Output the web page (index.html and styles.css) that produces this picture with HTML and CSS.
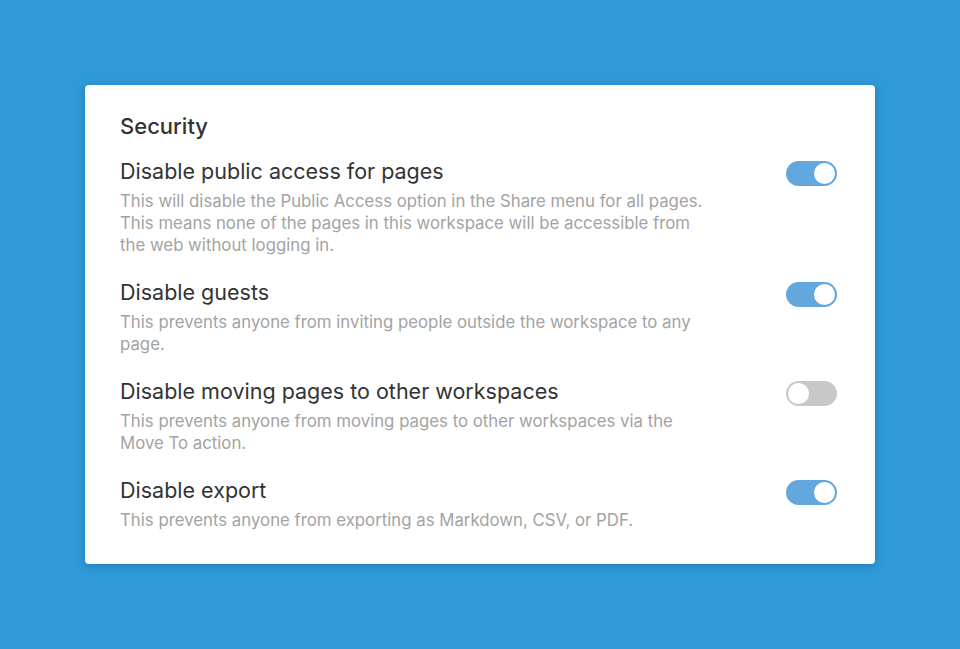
FILE: index.html
```html
<!DOCTYPE html>
<html>
<head>
<meta charset="utf-8">
<link rel="stylesheet" href="styles.css">
</head>
<body>
<div class="card">
  <h2 class="heading">Security</h2>
  <div class="row">
    <div class="text">
      <div class="title">Disable public access for pages</div>
      <div class="desc">This will disable the Public Access option in the Share menu for all pages.<br>This means none of the pages in this workspace will be accessible from<br>the web without logging in.</div>
    </div>
    <div class="toggle on"><span class="knob"></span></div>
  </div>
  <div class="row">
    <div class="text">
      <div class="title">Disable guests</div>
      <div class="desc">This prevents anyone from inviting people outside the workspace to any<br>page.</div>
    </div>
    <div class="toggle on"><span class="knob"></span></div>
  </div>
  <div class="row">
    <div class="text">
      <div class="title">Disable moving pages to other workspaces</div>
      <div class="desc">This prevents anyone from moving pages to other workspaces via the<br>Move To action.</div>
    </div>
    <div class="toggle"><span class="knob"></span></div>
  </div>
  <div class="row">
    <div class="text">
      <div class="title">Disable export</div>
      <div class="desc">This prevents anyone from exporting as Markdown, CSV, or PDF.</div>
    </div>
    <div class="toggle on"><span class="knob"></span></div>
  </div>
</div>
</body>
</html>
```
FILE: styles.css
```css
html, body {
  margin: 0;
  padding: 0;
}
body {
  background: #2e9bd8;
  width: 960px;
  height: 649px;
  padding-top: 85px;
  padding-left: 85px;
  box-sizing: border-box;
  font-family: Inter, "Open Sans", sans-serif;
  color: #333;
}
.card {
  width: 790px;
  box-sizing: border-box;
  background: #fff;
  border-radius: 4px;
  box-shadow: 0 2px 10px rgba(0, 40, 80, 0.25);
  padding: 28px 38px 33px 35px;
}
.heading {
  margin: 0 0 19px;
  font-size: 22px;
  line-height: 26px;
  font-weight: 500;
  color: #333;
}
.row {
  display: flex;
  justify-content: space-between;
  align-items: flex-start;
  margin-bottom: 23px;
}
.row:last-child {
  margin-bottom: 0;
}
.title {
  font-size: 21.5px;
  line-height: 26px;
  color: #333;
  margin-bottom: 6px;
}
.desc {
  font-size: 16.8px;
  line-height: 22px;
  color: #a3a3a3;
}
.toggle {
  width: 51px;
  height: 25px;
  border-radius: 13px;
  background: #c8c8c8;
  box-sizing: border-box;
  padding: 2px;
  display: flex;
  justify-content: flex-start;
  margin-top: 3px;
  flex-shrink: 0;
}
.toggle.on {
  background: #62a8de;
  justify-content: flex-end;
}
.knob {
  width: 21px;
  height: 21px;
  border-radius: 50%;
  background: #fff;
}
```
